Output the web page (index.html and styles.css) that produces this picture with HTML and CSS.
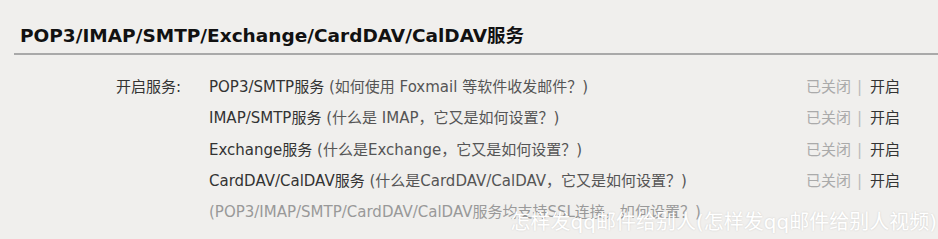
FILE: index.html
```html
<!DOCTYPE html>
<html lang="zh-CN">
<head>
  <meta charset="UTF-8">
  <meta name="viewport" content="width=device-width, initial-scale=1.0">
  <title>POP3/IMAP/SMTP/Exchange/CardDAV/CalDAV服务</title>
  <link rel="stylesheet" href="styles.css">
</head>
<body>
  <div class="panel">
    <h2 class="panel-title">POP3/IMAP/SMTP/Exchange/CardDAV/CalDAV服务</h2>
    <div class="settings">
      <div class="settings-label">开启服务:</div>
      <div class="settings-list">
        <div class="service">
          <div class="service-name">POP3/SMTP服务 <span class="help">(如何使用 Foxmail 等软件收发邮件？)</span></div>
          <div class="service-state"><span class="off">已关闭</span><span class="sep">|</span><a class="on">开启</a></div>
        </div>
        <div class="service">
          <div class="service-name">IMAP/SMTP服务 <span class="help">(什么是 IMAP，它又是如何设置？)</span></div>
          <div class="service-state"><span class="off">已关闭</span><span class="sep">|</span><a class="on">开启</a></div>
        </div>
        <div class="service">
          <div class="service-name">Exchange服务 <span class="help">(什么是Exchange，它又是如何设置？)</span></div>
          <div class="service-state"><span class="off">已关闭</span><span class="sep">|</span><a class="on">开启</a></div>
        </div>
        <div class="service">
          <div class="service-name">CardDAV/CalDAV服务 <span class="help">(什么是CardDAV/CalDAV，它又是如何设置？)</span></div>
          <div class="service-state"><span class="off">已关闭</span><span class="sep">|</span><a class="on">开启</a></div>
        </div>
        <div class="service note">(POP3/IMAP/SMTP/CardDAV/CalDAV服务均支持SSL连接，如何设置？)</div>
      </div>
    </div>
  </div>
  <div class="watermark">怎样发qq邮件给别人(怎样发qq邮件给别人视频)</div>
</body>
</html>
```

FILE: styles.css
```css
body {
  margin: 0;
  padding: 0;
  background-color: #f0efed;
  font-family: "DejaVu Sans", Verdana, "Noto Sans CJK SC", sans-serif;
  color: #333;
  height: 239px;
  overflow: hidden;
  position: relative;
}
.panel {
  padding-top: 24px;
}
.panel-title {
  margin: 0 0 0 14px;
  padding: 0 0 6px 6px;
  font-size: 18.5px;
  font-weight: bold;
  color: #111;
  border-bottom: 2px solid #a9a9a9;
  line-height: 23px;
}
.settings {
  display: flex;
  padding: 17px 38px 0 116px;
  font-size: 15px;
}
.settings-label {
  width: 93px;
  line-height: 31.3px;
  color: #333;
}
.settings-list {
  flex: 1;
}
.service {
  display: flex;
  justify-content: space-between;
  line-height: 31.3px;
}
.help {
  color: #555;
}
.off {
  color: #aaa;
}
.sep {
  color: #bbb;
  margin: 0 8px 0 6px;
}
.on {
  color: #333;
}
.note {
  color: #999;
}
.watermark {
  position: absolute;
  right: 1px;
  bottom: 4px;
  font-size: 20px;
  color: #fff;
  text-shadow: 0 0 2px rgba(0, 0, 0, 0.15);
  white-space: nowrap;
}
```
